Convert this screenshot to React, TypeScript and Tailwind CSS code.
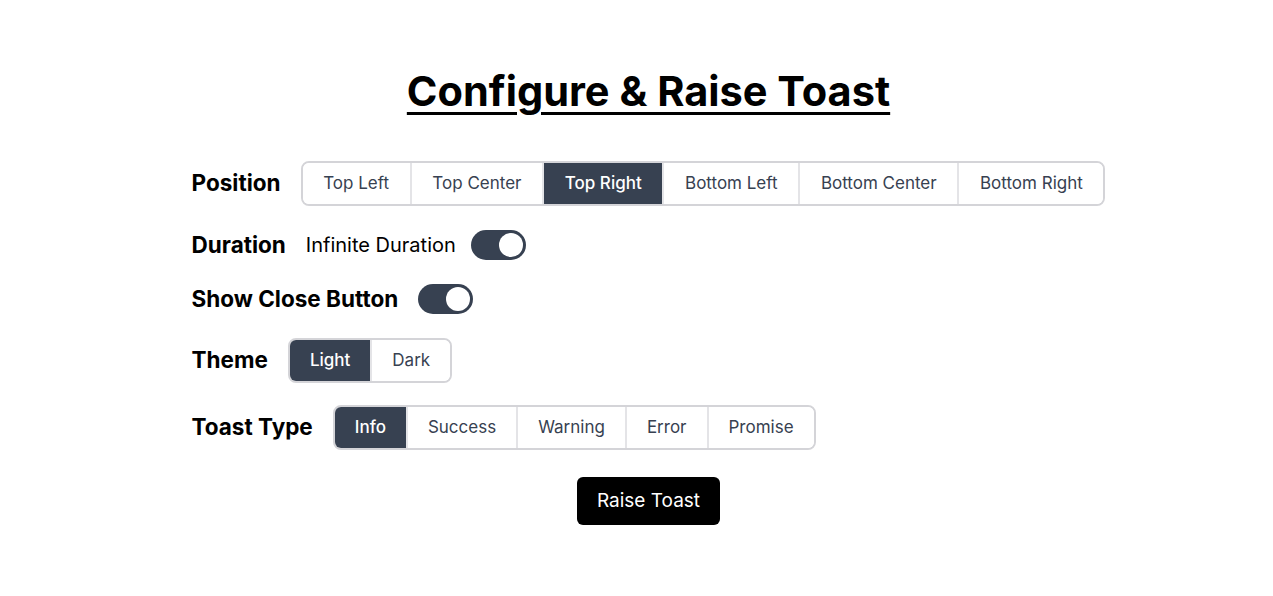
import React, { useState } from "react";

const font = { fontFamily: "Inter, 'Noto Sans', sans-serif" };

function Group({ items, selected, px }: { items: string[]; selected: string; px: string }) {
  return (
    <div className="flex overflow-hidden rounded-lg border-2 border-[#d4d4d8]">
      {items.map((it, i) => (
        <button
          key={it}
          className={
            "h-[41px] text-[17px] leading-none " +
            px +
            " " +
            (i > 0 ? "border-l-2 border-[#e4e4e7] " : "") +
            (it === selected ? "bg-[#374151] font-medium text-white" : "bg-white text-[#374151]")
          }
        >
          {it}
        </button>
      ))}
    </div>
  );
}

function Toggle() {
  return (
    <div className="flex h-[30px] w-[55px] items-center justify-end rounded-full bg-[#374151] px-[3px]">
      <div className="h-[24px] w-[24px] rounded-full bg-white" />
    </div>
  );
}

export default function App() {
  const [pos] = useState("Top Right");
  return (
    <div className="min-h-screen bg-white text-black" style={font}>
      <div className="flex justify-center pl-[24px]">
        <div className="flex flex-col">
          <h1 className="mt-[65px] text-center text-[41.5px] font-bold leading-[52px] underline decoration-[3px] underline-offset-[6px]">
            Configure &amp; Raise Toast
          </h1>
          <div className="mt-[44px] flex flex-col gap-6">
            <div className="flex h-[45px] items-center gap-5">
              <span className="text-[22.5px] font-bold leading-none">Position</span>
              <Group
                px="px-[20.67px]"
                items={["Top Left", "Top Center", "Top Right", "Bottom Left", "Bottom Center", "Bottom Right"]}
                selected={pos}
              />
            </div>
            <div className="flex h-[30px] items-center gap-5">
              <span className="text-[22.5px] font-bold leading-none">Duration</span>
              <div className="flex items-center gap-[15px]">
                <span className="text-[20px] leading-none">Infinite Duration</span>
                <Toggle />
              </div>
            </div>
            <div className="flex h-[30px] items-center gap-5">
              <span className="text-[22.5px] font-bold leading-none">Show Close Button</span>
              <Toggle />
            </div>
            <div className="flex h-[45px] items-center gap-5">
              <span className="text-[22.5px] font-bold leading-none">Theme</span>
              <Group px="px-5" items={["Light", "Dark"]} selected="Light" />
            </div>
            <div className="-mt-[2px] flex h-[45px] items-center gap-5">
              <span className="text-[22.5px] font-bold leading-none">Toast Type</span>
              <Group px="px-5" items={["Info", "Success", "Warning", "Error", "Promise"]} selected="Info" />
            </div>
            <div className="mt-[3px] flex justify-center">
              <button className="h-[48px] rounded-md bg-black px-5 text-[19px] text-white">Raise Toast</button>
            </div>
          </div>
        </div>
      </div>
    </div>
  );
}
